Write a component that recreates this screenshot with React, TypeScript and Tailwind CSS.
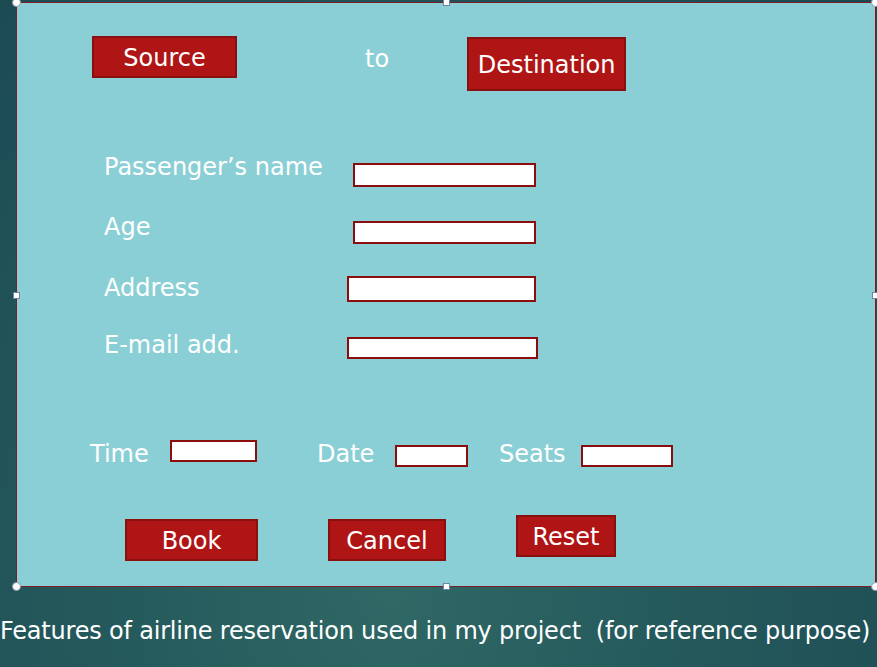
// @ts-nocheck
import React from 'react';

const font = "font-['DejaVu_Sans','Liberation_Sans',sans-serif]";

function Handle({ className }: { className: string }) {
  return <span className={`absolute ${className}`} />;
}

export default function App() {
  return (
    <div
      className={`${font} relative w-[877px] h-[667px] overflow-hidden bg-[radial-gradient(ellipse_at_45%_88%,#2f6865_0%,#255a5c_40%,#1b4852_100%)] text-white`}
    >
      {/* selected shape (slide mockup) */}
      <div className="relative ml-[16px] mt-[2px] w-[860px] h-[585px] bg-[#8bcfd6] border border-[#7b1f25] box-border">
        {/* route row */}
        <div className="flex items-start mt-[33px]">
          <div className="ml-[75px] w-[145px] h-[42px] pt-[2px] bg-[#b01515] border-2 border-[#8a1010] flex items-center justify-center text-[24px] leading-[28px]">
            Source
          </div>
          <div className="ml-[128px] mt-[9px] text-[24px] leading-[28px]">to</div>
          <div className="ml-[78px] mt-[1px] w-[159px] h-[54px] pt-[2px] bg-[#b01515] border-2 border-[#8a1010] flex items-center justify-center text-[24px] leading-[28px]">
            Destination
          </div>
        </div>

        {/* passenger details */}
        <div className="flex items-start mt-[60px] text-[24px] leading-[28px]">
          <div className="ml-[87px] w-[249px] pt-[2px]">Passenger’s name</div>
          <div className="mt-[12px] w-[183px] h-[24px] bg-white border-2 border-[#8b0e0e]" />
        </div>
        <div className="flex items-start mt-[24px] text-[24px] leading-[28px]">
          <div className="ml-[87px] w-[249px] pt-[2px]">Age</div>
          <div className="mt-[10px] w-[183px] h-[23px] bg-white border-2 border-[#8b0e0e]" />
        </div>
        <div className="flex items-start mt-[28px] text-[24px] leading-[28px]">
          <div className="ml-[87px] w-[243px] pt-[2px]">Address</div>
          <div className="mt-[4px] w-[189px] h-[26px] bg-white border-2 border-[#8b0e0e]" />
        </div>
        <div className="flex items-start mt-[27px] text-[24px] leading-[28px]">
          <div className="ml-[87px] w-[243px] pt-[2px]">E-mail add.</div>
          <div className="mt-[8px] w-[191px] h-[22px] bg-white border-2 border-[#8b0e0e]" />
        </div>

        {/* time / date / seats */}
        <div className="flex items-start mt-[79px] text-[24px] leading-[28px]">
          <div className="ml-[73px] w-[80px] pt-[2px]">Time</div>
          <div className="mt-[2px] w-[87px] h-[22px] bg-white border-2 border-[#8b0e0e]" />
          <div className="ml-[60px] w-[78px] pt-[2px]">Date</div>
          <div className="mt-[7px] w-[73px] h-[22px] bg-white border-2 border-[#8b0e0e]" />
          <div className="ml-[31px] w-[82px] pt-[2px]">Seats</div>
          <div className="mt-[7px] w-[92px] h-[22px] bg-white border-2 border-[#8b0e0e]" />
        </div>

        {/* actions */}
        <div className="flex items-start mt-[47px] text-[24px] leading-[28px]">
          <div className="ml-[108px] mt-[4px] w-[133px] h-[42px] pt-[2px] bg-[#b01515] border-2 border-[#8a1010] flex items-center justify-center">
            Book
          </div>
          <div className="ml-[70px] mt-[4px] w-[118px] h-[42px] pt-[2px] bg-[#b01515] border-2 border-[#8a1010] flex items-center justify-center">
            Cancel
          </div>
          <div className="ml-[70px] w-[100px] h-[42px] pt-[2px] bg-[#b01515] border-2 border-[#8a1010] flex items-center justify-center">
            Reset
          </div>
        </div>

        {/* selection handles */}
        <Handle className="-left-[5px] -top-[5px] w-[9px] h-[9px] rounded-full bg-white border border-[#8a99a8]" />
        <Handle className="-right-[5px] -top-[5px] w-[9px] h-[9px] rounded-full bg-white border border-[#8a99a8]" />
        <Handle className="-left-[5px] -bottom-[5px] w-[9px] h-[9px] rounded-full bg-white border border-[#8a99a8]" />
        <Handle className="-right-[5px] -bottom-[5px] w-[9px] h-[9px] rounded-full bg-white border border-[#8a99a8]" />
        <Handle className="left-[426px] -top-[4px] w-[7px] h-[7px] bg-white border border-[#6d86a3]" />
        <Handle className="left-[426px] -bottom-[4px] w-[7px] h-[7px] bg-white border border-[#6d86a3]" />
        <Handle className="-left-[4px] top-[289px] w-[7px] h-[7px] bg-white border border-[#6d86a3]" />
        <Handle className="-right-[4px] top-[289px] w-[7px] h-[7px] bg-white border border-[#6d86a3]" />
      </div>

      {/* caption */}
      <div className="mt-[30px] text-[24px] leading-[28px] tracking-[-0.2px] whitespace-pre">
        Features of airline reservation used in my project  (for reference purpose)
      </div>
    </div>
  );
}
